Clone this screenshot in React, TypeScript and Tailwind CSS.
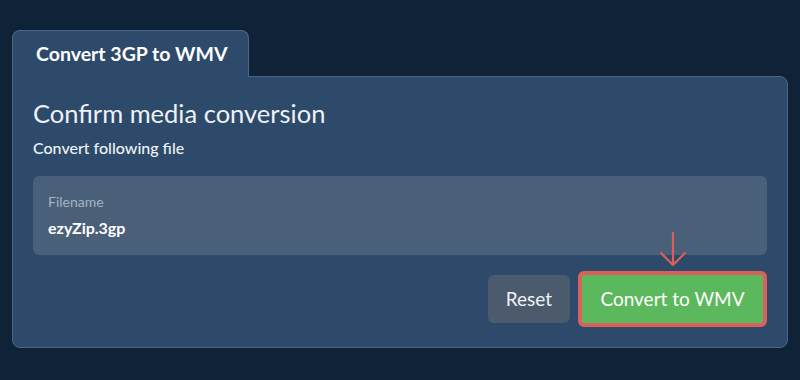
import React from 'react';

export default function App() {
  return (
    <div className="min-h-[380px] bg-[#0f2237] px-3 pt-[30px] font-['Lato','Noto_Sans',sans-serif]">
      {/* tab */}
      <div className="relative z-10 -mb-px inline-flex h-[47px] items-center rounded-t-lg border border-b-0 border-[#4b6788] bg-[#2d4a6a] pl-[23px] pr-[20px]">
        <span className="text-[19.5px] font-bold text-white">Convert 3GP to WMV</span>
      </div>

      {/* panel */}
      <div className="h-[272px] rounded-b-lg rounded-tr-lg border border-[#4b6788] bg-[#2d4a6a] px-5 pt-[19px]">
        <h1 className="text-[25.5px] leading-[34px] text-[#eef2f6]">Confirm media conversion</h1>
        <p className="mt-[7px] text-[16px] font-medium leading-[22px] text-[#eef2f6]">Convert following file</p>

        <div className="mt-[17px] h-[79px] rounded-md bg-[#4a6078] px-[15px] pt-[17px]">
          <div className="text-[14px] leading-[18px] text-[#a6b3c2]">Filename</div>
          <div className="mt-[7px] text-[16px] font-bold leading-[20px] text-white">ezyZip.3gp</div>
        </div>

        <div className="mt-[16px] flex items-center justify-end gap-2">
          <button className="h-[48px] rounded-md bg-[#4b5b6d] px-[18px] text-[19px] text-[#eef2f6]">Reset</button>
          <div className="relative">
            {/* annotation arrow */}
            <svg className="absolute -top-[39px] left-[80px]" width="30" height="36" viewBox="0 0 30 36" fill="none">
              <path d="M15 1 V33 M3 21 L15 33 L27 21" stroke="#db5f5a" strokeWidth="2.2" strokeLinecap="round" strokeLinejoin="round" />
            </svg>
            <button className="h-[56px] w-[189px] rounded-md border-[4px] border-[#db5f5a] bg-[#5cb85c] text-[19px] text-white">
              Convert to WMV
            </button>
          </div>
        </div>
      </div>
    </div>
  );
}
